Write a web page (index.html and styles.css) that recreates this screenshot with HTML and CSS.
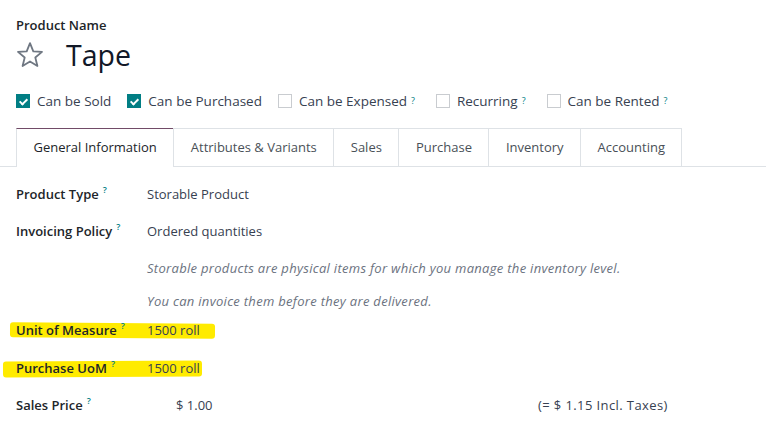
FILE: index.html
```html
<!DOCTYPE html>
<html lang="en">
<head>
<meta charset="UTF-8">
<title>Tape - Product</title>
<link rel="stylesheet" href="styles.css">
</head>
<body>
<div class="sheet">
  <div class="title">
    <label class="name-label">Product Name</label>
    <h1>
      <svg class="star" viewBox="0 0 28 28" width="28" height="28">
        <path d="M14 2.2 L17.3 10.3 L26 10.9 L19.3 16.5 L21.4 25 L14 20.4 L6.6 25 L8.7 16.5 L2 10.9 L10.7 10.3 Z" fill="none" stroke="#6f7782" stroke-width="1.8" stroke-linejoin="round"/>
      </svg>
      <span>Tape</span>
    </h1>
  </div>

  <div class="options">
    <span class="opt"><i class="box checked"></i>Can be Sold</span>
    <span class="opt"><i class="box checked"></i>Can be Purchased</span>
    <span class="opt"><i class="box"></i>Can be Expensed<sup>?</sup></span>
    <span class="opt"><i class="box"></i>Recurring<sup>?</sup></span>
    <span class="opt"><i class="box"></i>Can be Rented<sup>?</sup></span>
  </div>

  <ul class="tabs">
    <li class="active">General Information</li>
    <li>Attributes &amp; Variants</li>
    <li>Sales</li>
    <li>Purchase</li>
    <li>Inventory</li>
    <li>Accounting</li>
  </ul>

  <div class="fields">
    <div class="row r-type"><span class="lbl">Product Type<sup>?</sup></span><span class="val">Storable Product</span></div>
    <div class="row r-inv"><span class="lbl">Invoicing Policy<sup>?</sup></span><span class="val">Ordered quantities</span></div>
    <div class="row r-help1"><span class="lbl"></span><span class="val help">Storable products are physical items for which you manage the inventory level.</span></div>
    <div class="row r-help2"><span class="lbl"></span><span class="val help">You can invoice them before they are delivered.</span></div>
    <div class="row r-uom hl hl-1"><span class="lbl">Unit of Measure<sup>?</sup></span><span class="val">1500 roll</span></div>
    <div class="row r-puom hl hl-2"><span class="lbl">Purchase UoM<sup>?</sup></span><span class="val">1500 roll</span></div>
    <div class="row r-price"><span class="lbl">Sales Price<sup>?</sup></span><span class="val price">$ 1.00</span><span class="taxes">(= $ 1.15 Incl. Taxes)</span></div>
  </div>
</div>
</body>
</html>
```

FILE: styles.css
```css
body {
    margin: 0;
    background: #fff;
    font-family: "Open Sans", "Noto Sans", sans-serif;
    font-size: 13px;
    color: #374151;
}

.sheet {
    padding-top: 15px;
}

.title {
    padding-left: 16px;
}

.name-label {
    display: block;
    font-weight: 600;
    color: #212529;
    line-height: 20px;
}

h1 {
    margin: 0;
    display: flex;
    align-items: center;
    height: 40px;
    font-weight: 400;
    font-size: 28.5px;
    color: #111827;
}

h1 .star {
    margin-right: 22px;
}

.options {
    display: flex;
    align-items: center;
    padding-left: 16px;
    margin-top: 16px;
    height: 20px;
    font-size: 13.5px;
}

.opt {
    display: flex;
    align-items: center;
    margin-right: 16px;
    color: #374151;
}

.opt sup {
    margin-right: 5px;
    vertical-align: 8px;
}

.box {
    display: inline-block;
    width: 14px;
    height: 14px;
    box-sizing: border-box;
    border: 1px solid #c9ccd0;
    margin-right: 7px;
    position: relative;
}

.box.checked {
    background: #017e84;
    border-color: #017e84;
}

.box.checked::after {
    content: "";
    position: absolute;
    left: 4px;
    top: 2px;
    width: 3px;
    height: 6px;
    border: solid #fff;
    border-width: 0 2px 2px 0;
    transform: rotate(45deg);
}

sup {
    font-size: 9px;
    color: #017e84;
    margin-left: 4px;
    vertical-align: 6px;
    line-height: 0;
}

.tabs {
    list-style: none;
    margin: 17px 0 0 0;
    padding: 0 0 0 16px;
    display: flex;
    border-bottom: 1px solid #dee2e6;
}

.tabs li {
    height: 37px;
    line-height: 37px;
    padding: 0 16.5px;
    border: 1px solid #dee2e6;
    border-bottom: none;
    margin-left: -1px;
    margin-bottom: -1px;
    color: #495057;
    background: #fff;
}

.tabs li:first-child {
    margin-left: 0;
}

.tabs li.active {
    border-top: 1px solid #714b67;
    height: 38px;
    color: #212529;
}

.fields {
    padding: 8px 16px 0 16px;
}

.row {
    display: flex;
    align-items: center;
    height: 37px;
    position: relative;
}

.r-help2 { height: 29px; }
.r-uom { height: 29px; }
.r-puom { height: 47px; }
.r-price { height: 27px; }

.lbl {
    width: 131px;
    font-weight: 600;
    color: #212529;
    z-index: 1;
}

.val {
    z-index: 1;
}

.help {
    font-style: italic;
    color: #6b7280;
    letter-spacing: 0.3px;
}

.price {
    padding-left: 29px;
    width: 362px;
}

.taxes {
    color: #374151;
    letter-spacing: 0.4px;
}

.hl::before {
    content: "";
    position: absolute;
    background: #ffeb00;
    border-radius: 3px;
    z-index: 0;
}

.hl-1::before {
    left: -6px;
    width: 205px;
    top: 8px;
    height: 15px;
    transform: rotate(0.4deg);
}

.hl-2::before {
    left: -13px;
    width: 199px;
    top: 17px;
    height: 16px;
    transform: rotate(-0.3deg);
}
```
